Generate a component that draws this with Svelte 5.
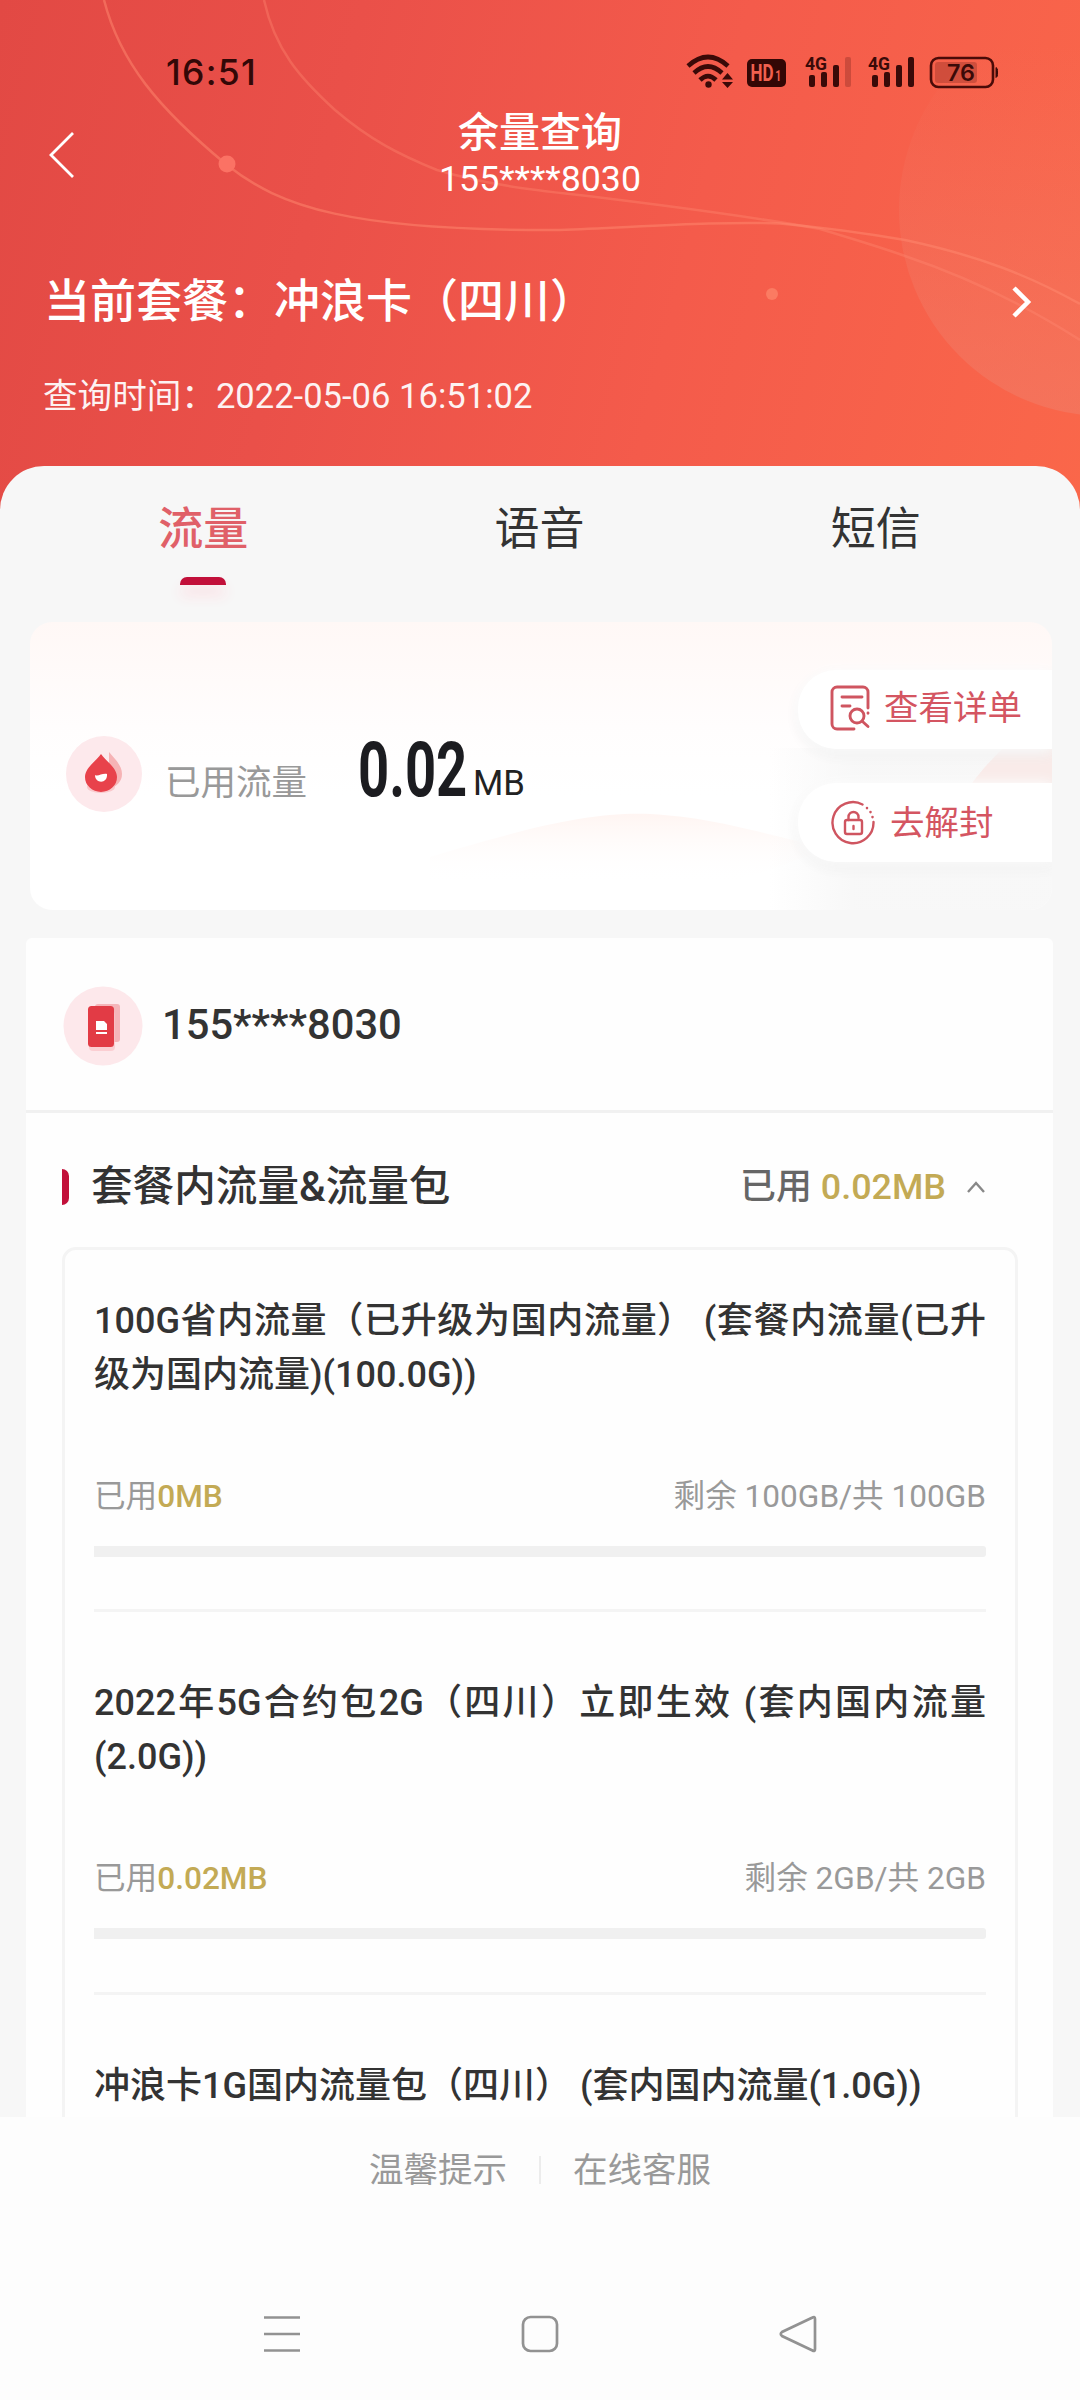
<script>
  const tabs = ['流量', '语音', '短信'];
  const packs = [
    {
      lines: ['100G省内流量（已升级为国内流量） (套餐内流量(已升', '级为国内流量)(100.0G))'],
      used: '0MB',
      rest: '剩余 100GB/共 100GB'
    },
    {
      lines: ['2022年5G合约包2G（四川）立即生效 (套内国内流量', '(2.0G))'],
      used: '0.02MB',
      rest: '剩余 2GB/共 2GB'
    },
    { lines: ['冲浪卡1G国内流量包（四川） (套内国内流量(1.0G))'] }
  ];
</script>

<div class="page">
  <header>
    <svg class="backdrop" viewBox="0 0 1080 530" width="1080" height="530" fill="none">
      <circle cx="1105" cy="210" r="206" fill="url(#glow)" />
      <path d="M104 0C120 62 158 108 227 165C280 207 350 231 560 230C640 227 720 221 780 223.500C840 229 870 234 905 240C980 256 1030 276 1080 304" stroke="#ff8a70" stroke-opacity=".5" stroke-width="2.500" />
      <path d="M264 0C275 50 300 78 335 110C370 140 400 155 437 170C500 189 560 192 620 200C700 210 760 218 820 229C850 238 880 247 905 256C970 278 1030 308 1080 340" stroke="#ff8a70" stroke-opacity=".38" stroke-width="2.500" />
      <circle cx="227" cy="164" r="8.500" fill="#fb7264" />
      <circle cx="772" cy="294" r="6" fill="#fb7b62" />
      <defs>
        <linearGradient id="glow" x1="0" y1="0" x2="0" y2="1">
          <stop offset=".1" stop-color="#f0806c" stop-opacity="0" />
          <stop offset="1" stop-color="#f0806c" stop-opacity=".5" />
        </linearGradient>
      </defs>
    </svg>

    <div class="status">
      <span class="clock">16:51</span>
      <svg class="indicators" viewBox="0 0 320 44" width="320" height="44">
        <g fill="none" stroke="#3a0a08" stroke-width="4.600">
          <path d="M5 16Q25 -2 45 16" />
          <path d="M11 23Q25 10 39 23" />
          <path d="M17 30Q25 22 33 30" />
        </g>
        <circle cx="25.500" cy="34.500" r="3.200" fill="#3a0a08" />
        <path d="M39 29.500L44.500 23L50 29.500ZM39 32L44.500 38L50 32Z" fill="#3a0a08" />
        <rect x="64" y="9" width="39" height="28" rx="5" fill="#330705" />
        <g transform="translate(67.500 31) scale(.74 1)">
          <text class="hd">HD</text>
          <text x="33.500" class="one">1</text>
        </g>
        <text x="122" y="20" class="net" textLength="22" lengthAdjust="spacingAndGlyphs">4G</text>
        <g fill="#3a0a08">
          <rect x="126" y="25" width="6" height="12" rx="2" />
          <rect x="138" y="22" width="6" height="15" rx="2" />
          <rect x="150" y="15" width="6" height="22" rx="2" />
          <rect x="162" y="7" width="6" height="30" rx="2" opacity=".22" />
        </g>
        <text x="185" y="20" class="net" textLength="22" lengthAdjust="spacingAndGlyphs">4G</text>
        <g fill="#3a0a08">
          <rect x="189" y="25" width="6" height="12" rx="2" />
          <rect x="201" y="22" width="6" height="15" rx="2" />
          <rect x="213" y="15" width="6" height="22" rx="2" />
          <rect x="225" y="7" width="6" height="30" rx="2" />
        </g>
        <rect x="248" y="8" width="62" height="29" rx="7.500" fill="none" stroke="#4a0b08" stroke-width="2.600" />
        <rect x="252" y="12" width="42" height="21" rx="3" fill="#4a0b08" opacity=".22" />
        <path d="M313 17.500a3 3 0 0 1 1.500 3v4a3 3 0 0 1-1.500 3z" fill="#3a0a08" stroke="#3a0a08" />
        <text x="264" y="31" class="level" textLength="28" lengthAdjust="spacingAndGlyphs">76</text>
      </svg>
    </div>

    <div class="titlebar">
      <svg width="30" height="50" viewBox="0 0 30 50" fill="none" stroke="#fff" stroke-width="2.800"><path d="M27 3L5 25L27 47" /></svg>
      <div class="titles">
        <h1>余量查询</h1>
        <p>155****8030</p>
      </div>
    </div>

    <div class="plan">
      <span>当前套餐：冲浪卡（四川）</span>
      <svg width="22" height="34" viewBox="0 0 22 34" fill="none" stroke="#fff" stroke-width="4.500"><path d="M3 3L17 17L3 31" /></svg>
    </div>
    <p class="query">查询时间：<span>2022-05-06 16:51:02</span></p>
  </header>

  <main>
    <nav class="tabs">
      {#each tabs as tab, i}
        <div class="tab" class:active={i === 0}>{tab}</div>
      {/each}
    </nav>

    <section class="summary">
      <svg class="tint" viewBox="0 0 1022 288" width="1022" height="288">
        <defs>
          <linearGradient id="wave" x1="0" y1="0" x2="0" y2="1">
            <stop offset="0" stop-color="#fff5f2" />
            <stop offset="1" stop-color="#fff" stop-opacity="0" />
          </linearGradient>
          <linearGradient id="shade" x1="0" y1="0" x2="1" y2="0">
            <stop offset="0" stop-color="#f6f6f6" stop-opacity="0" />
            <stop offset=".3" stop-color="#f6f6f6" />
          </linearGradient>
        </defs>
        <path d="M400 235C500 205 560 190 620 192C690 196 730 212 800 226L700 262H400Z" fill="url(#wave)" />
        <path d="M740 126H1022V288H740Z" fill="url(#shade)" opacity=".8" />
        <path d="M934 172C950 150 960 138 980 120H1022V172Z" fill="#f9ebe9" />
      </svg>
      <div class="usage">
        <svg width="80" height="80" viewBox="0 0 80 80">
          <circle cx="40" cy="40" r="38" fill="#fde9ec" />
          <path d="M45 18C52 26 58 32 58 40A14 14 0 0 1 45 54Z" fill="#f6b3b5" />
          <ellipse cx="37" cy="53" rx="14" ry="6" fill="#f8b9bd" opacity=".7" />
          <path d="M37 20C42 27 53 34 53 43A16 15 0 0 1 21 43C21 34 32 27 37 20Z" fill="#e8424b" />
          <path d="M31 41C34 43 38 39 43 40C44 50 31 50 31 41Z" fill="#fff" />
        </svg>
        <span class="label">已用流量</span>
        <span class="amount"><b>0.02</b></span>
        <span class="unit">MB</span>
      </div>
      <div class="actions">
        <div class="action">
          <svg width="44" height="48" viewBox="0 0 44 48" fill="none" stroke="#cf5560" stroke-width="2.900" stroke-linecap="round">
            <path d="M25 45H8a5 5 0 0 1-5-5V8a5 5 0 0 1 5-5H34a5 5 0 0 1 5 5V24M39 29v.2M13 13H33M13 22H21" />
            <circle cx="28" cy="32" r="7" /><path d="M33.500 37.500L39 42.500" />
          </svg>
          <span>查看详单</span>
        </div>
        <div class="action second">
          <svg width="46" height="46" viewBox="0 0 46 46" fill="none" stroke="#cf5560" stroke-width="2.400" stroke-linecap="round">
            <path d="M32.500 4.500A20.500 20.500 0 1 0 43.500 22" />
            <path d="M37 8v.1M40.500 12v.1M42.500 17v.1" stroke-width="2.600" />
            <rect x="15" y="20" width="17" height="14" rx="2" /><path d="M18.500 20V17a5 5 0 0 1 10 0v1M23.500 26v3" />
          </svg>
          <span>去解封</span>
        </div>
      </div>
    </section>

    <section class="detail">
      <div class="number">
        <svg width="80" height="80" viewBox="0 0 80 80">
          <circle cx="40" cy="40" r="39.500" fill="#fde8eb" />
          <rect x="32" y="18" width="25" height="38" rx="3" fill="#f5b5b9" />
          <rect x="26" y="25" width="26" height="40" rx="4" fill="#f9c3c7" opacity=".7" />
          <rect x="25" y="20" width="26" height="41" rx="3.500" fill="#e23b45" />
          <path d="M33 35h8l3 3v6H33zM33 46h11v2H33z" fill="#fff" />
        </svg>
        <span>155****8030</span>
      </div>
      <div class="group">
        <i class="mark"></i>
        <h2>套餐内流量&amp;流量包</h2>
        <span class="used">已用 <b>0.02MB</b></span>
        <svg width="20" height="14" viewBox="0 0 20 14" fill="none" stroke="#888" stroke-width="2.400"><path d="M2 12L10 3L18 12" /></svg>
      </div>
      <div class="packs">
        {#each packs as pack}
          <article>
            <h3>
              {#each pack.lines as line, i}
                <span class:full={i < pack.lines.length - 1}>{line}</span>
              {/each}
            </h3>
            {#if pack.used}
              <div class="figures">
                <span>已用<b>{pack.used}</b></span>
                <span>{pack.rest}</span>
              </div>
              <div class="bar"></div>
            {/if}
          </article>
        {/each}
      </div>
    </section>
  </main>

  <footer>
    <div class="links"><span>温馨提示</span><i></i><span>在线客服</span></div>
    <div class="system">
      <svg viewBox="0 0 40 40"><path d="M2 3.500H38M2 20H38M2 36.500H38" /></svg>
      <svg viewBox="0 0 40 40"><rect x="3" y="3" width="34" height="34" rx="7.500" /></svg>
      <svg viewBox="0 0 40 40"><path d="M34.500 3.500Q37 2 37 5V35Q37 38 34.500 36.500L4 22Q1.500 20 4 18Z" /></svg>
    </div>
  </footer>
</div>

<style>
  :global(body) { margin: 0; background: #fdfdfd; }
  * { box-sizing: border-box; }
  h1, h2, h3, p { margin: 0; font-weight: 400; }
  i { font-style: normal; }
  svg { flex: none; display: block; }
  .page {
    width: 1080px;
    height: 2400px;
    overflow: hidden;
    display: flex;
    flex-direction: column;
    font-family: Roboto, "Noto Sans CJK SC", sans-serif;
    color: #333;
    white-space: nowrap;
  }

  header {
    position: relative;
    flex: none;
    height: 530px;
    padding-top: 50px;
    color: #fff;
    background: linear-gradient(104deg, #e24944 0%, #ea5049 30%, #f45b4b 62%, #fa674a 100%);
  }
  .backdrop { position: absolute; left: 0; top: 0; }
  .status { position: relative; height: 44px; display: flex; align-items: center; justify-content: space-between; padding: 0 77px 0 166px; }
  .clock { font: 500 35.500px/44px Inter, sans-serif; color: #330807; letter-spacing: 1.300px; padding-top: 2px; }
  .hd { font: 700 23px Roboto, sans-serif; fill: #f0604e; }
  .one { font: 700 14px Roboto, sans-serif; fill: #f0604e; }
  .net { font: 700 19px Roboto, sans-serif; fill: #3a0a08; }
  .level { font: 600 23.500px Inter, sans-serif; fill: #3a0a08; }

  .titlebar { position: relative; margin-top: 10px; height: 102px; display: grid; grid-template-columns: 60px 1fr 60px; align-items: center; padding: 0 46px; }
  .titles { text-align: center; }
  .titles h1 { font-size: 41px; line-height: 52px; font-weight: 500; }
  .titles p { font-size: 35.700px; line-height: 40px; padding-bottom: 4px; }
  .plan { position: relative; margin-top: 66px; height: 60px; padding: 0 47px 0 44px; display: flex; align-items: center; justify-content: space-between; font-size: 46px; line-height: 60px; font-weight: 500; }
  .plan span { margin-top: -3px; }
  .query { position: relative; margin-top: 39px; padding-left: 43px; font-size: 34.600px; line-height: 50px; opacity: .93; }

  main { position: relative; flex: none; margin-top: -64px; height: 1651px; overflow: hidden; background: #f7f7f7; border-radius: 44px 44px 0 0; }
  .tabs { height: 156px; padding: 34px 36px 0 35px; display: grid; grid-template-columns: repeat(3, 1fr); }
  .tab { display: flex; flex-direction: column; align-items: center; font-size: 45px; line-height: 60px; color: #333; }
  .active { color: #e06068; font-weight: 500; }
  .active::after { content: ""; width: 46px; height: 8px; margin-top: 17px; border-radius: 7px 7px 0 0; background: #c2103a; box-shadow: 0 10px 14px #fbdde2; }

  .summary { position: relative; margin: 0 28px 0 30px; height: 288px; border-radius: 22px; overflow: hidden; display: flex; justify-content: space-between; background: linear-gradient(#fff8f6, #fffdfd 36%, #fff 60%); }
  .tint { position: absolute; left: 0; top: 0; }
  .usage { position: relative; display: flex; padding: 112px 0 0 34px; }
  .label { margin: 24px 0 0 21px; width: 142px; font-size: 35.500px; line-height: 50px; color: #999; }
  .amount { width: 106px; margin: -4px 0 0 51px; font-size: 76px; line-height: 80px; color: #1c1c20; }
  .amount b { display: inline-block; transform: scaleX(.715); transform-origin: 0 50%; font-weight: 700; }
  .unit { margin: 24px 0 0 9px; font-size: 34.700px; line-height: 50px; color: #222; }
  .actions { position: relative; width: 254px; padding-top: 48px; }
  .action { height: 79px; margin-bottom: 34px; padding-left: 31px; display: flex; align-items: center; gap: 11px; border-radius: 38px 0 0 38px; background: #fff; box-shadow: 0 0 14px #fff, 0 5px 14px #eee; font-size: 34.500px; line-height: 50px; color: #d45561; }
  .action svg, .action span { margin-top: -4px; }
  .action.second { gap: 14px; padding-left: 32px; }
  .action.second svg, .action.second span { margin-top: 0; }

  .detail { margin: 28px 27px 0 26px; height: 1300px; background: #fefefe; border-radius: 6px 6px 0 0; }
  .number { height: 175px; padding: 48px 0 0 37px; display: flex; border-bottom: 3px solid #f1f1f1; font-size: 41.700px; font-weight: 500; line-height: 78px; }
  .number span { margin-left: 19px; }
  .group { height: 134px; padding: 14px 67px 0 36px; display: flex; align-items: center; }
  .mark { width: 7px; height: 36px; border-radius: 0 7px 7px 0; background: #c2103a; }
  .group h2 { margin-left: 22px; flex: 1; font-size: 41.600px; line-height: 60px; font-weight: 500; }
  .used { font-size: 35.900px; line-height: 50px; margin-right: 20px; color: #666; font-weight: 500; }
  b { color: #c3aa55; font-weight: 500; }
  .amount b { color: inherit; }
  .packs { margin: 0 35px 0 36px; padding: 0 29px; border: 3px solid #f4f4f4; border-radius: 14px; height: 1200px; }
  article { height: 383px; padding-top: 44px; border-bottom: 3px solid #f4f4f4; }
  article:first-child { height: 362px; }
  h3 { font-size: 36px; line-height: 54px; font-weight: 500; }
  h3 span { display: block; }
  .full { text-align: justify; text-align-last: justify; }
  .figures { margin-top: 70px; height: 50px; display: flex; justify-content: space-between; font-size: 31.600px; line-height: 50px; color: #999; }
  .bar { margin-top: 24px; height: 11px; background: #f0f0f0; border-radius: 0 3px 3px 0; }
  article + article { padding-top: 64px; }

  footer { flex: 1; background: #fdfdfd; }
  .links { height: 106px; display: flex; align-items: center; justify-content: center; gap: 32px; font-size: 34.500px; line-height: 50px; color: #999; }
  .links i { width: 2px; height: 28px; background: #ececec; }
  .system { margin-top: 91px; padding: 0 262px; display: flex; justify-content: space-between; }
  .system svg { width: 40px; height: 40px; fill: none; stroke: #929292; stroke-width: 2.700; }
</style>
